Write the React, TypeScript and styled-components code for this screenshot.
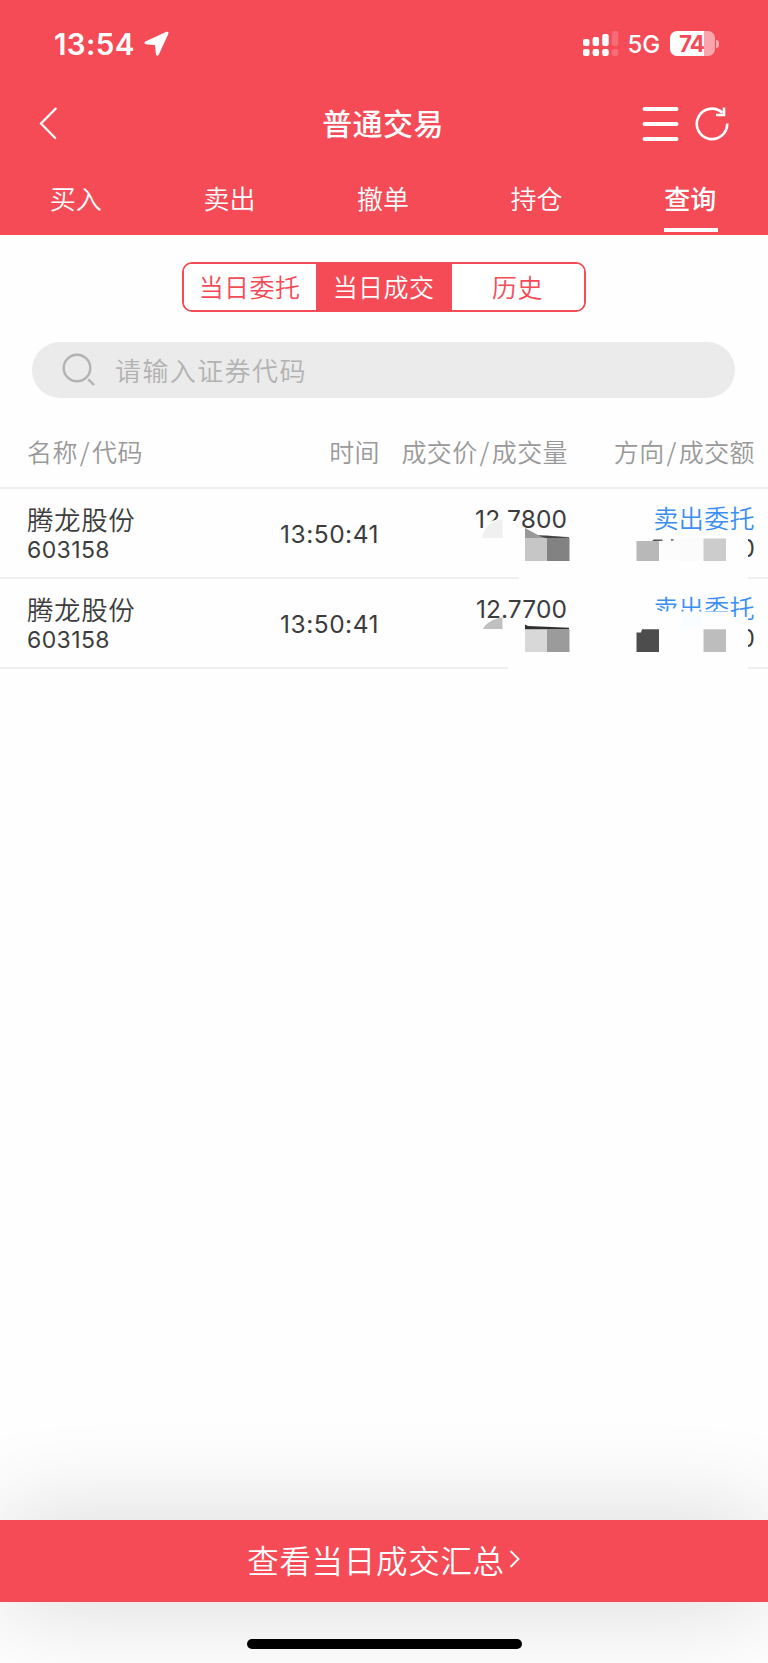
import React from "react";
import styled, { createGlobalStyle } from "styled-components";

const RED = "#f54b57";

const GlobalStyle = createGlobalStyle`
  * { box-sizing: border-box; }
  body {
    margin: 0;
    background: #fefefe;
    font-family: "Noto Sans CJK SC", sans-serif;
    color: #3c3c3c;
  }
`;

const Screen = styled.div`
  width: 768px;
  height: 1663px;
  display: flex;
  flex-direction: column;
  overflow: hidden;
  background: #fefefe;
`;

const Header = styled.header`
  height: 235px;
  background: ${RED};
  color: #fff;
  display: flex;
  flex-direction: column;
`;

const StatusBar = styled.div`
  height: 87px;
  padding: 0 49px 0 54px;
  display: flex;
  align-items: center;
  font-family: Inter, sans-serif;
`;

const Clock = styled.span`
  font-size: 29.5px;
  font-weight: 600;
  line-height: 36px;
  letter-spacing: 0.4px;
  margin: 1px 8px 0 0;
`;

const Network = styled.span`
  font-size: 24px;
  font-weight: 500;
  line-height: 30px;
  letter-spacing: -0.2px;
  margin: 3px 10px 0 9px;
`;

const Spacer = styled.div`
  flex: 1;
`;

const Battery = styled.div`
  display: flex;
  align-items: center;
  gap: 1px;
`;

const BatteryBody = styled.div`
  width: 45px;
  height: 25px;
  border-radius: 7px;
  background: linear-gradient(90deg, #fff 34px, #faa5ab 34px);
  color: ${RED};
  font-size: 22.5px;
  font-weight: 700;
  line-height: 26px;
  letter-spacing: -1px;
  padding-left: 9px;
`;

const BatteryCap = styled.div`
  width: 3px;
  height: 8px;
  border-radius: 0 4px 4px 0;
  background: #faa5ab;
`;

const TitleBar = styled.div`
  height: 74px;
  padding: 0 38px;
  display: grid;
  grid-template-columns: 1fr auto 1fr;
  align-items: center;
`;

const Title = styled.h1`
  margin: 0 2px 4px 0;
  font-size: 30px;
  line-height: 44px;
  font-weight: 500;
  letter-spacing: 0.4px;
`;

const Actions = styled.div`
  display: flex;
  justify-content: flex-end;
  align-items: center;
  gap: 14px;
`;

const Tabs = styled.nav`
  flex: 1;
  display: grid;
  grid-template-columns: repeat(5, 1fr);
  justify-items: center;
`;

const Tab = styled.div<{ $active?: boolean }>`
  width: 54px;
  height: 71px;
  padding-top: 18px;
  text-align: center;
  font-size: 26px;
  line-height: 38px;
  font-weight: ${(p) => (p.$active ? 500 : 350)};
  border-bottom: 4px solid ${(p) => (p.$active ? "#fff" : "transparent")};
  white-space: nowrap;
  text-indent: -2px;
`;

const Segments = styled.div`
  align-self: center;
  width: 404px;
  height: 50px;
  margin-top: 27px;
  display: grid;
  grid-template-columns: 132px 136px 1fr;
  border: 2px solid ${RED};
  border-radius: 10px;
  overflow: hidden;
`;

const Segment = styled.div<{ $active?: boolean }>`
  font-size: 25px;
  line-height: 45px;
  font-weight: 350;
  letter-spacing: 0.4px;
  text-align: center;
  text-indent: -1px;
  background: ${(p) => (p.$active ? RED : "#fff")};
  color: ${(p) => (p.$active ? "#fff" : RED)};
`;

const Search = styled.div`
  height: 56px;
  margin: 30px 33px 0 32px;
  padding-left: 30px;
  border-radius: 28px;
  background: #ebebeb;
  color: #b2b2b2;
  display: flex;
  align-items: center;
  gap: 19px;
`;

const Placeholder = styled.span`
  margin-bottom: 1px;
  font-size: 26px;
  font-weight: 350;
  line-height: 38px;
  letter-spacing: 1.4px;
`;

const Table = styled.div`
  position: relative;
`;

const TableHead = styled.div`
  height: 91px;
  padding: 17px 13px 0 27px;
  display: grid;
  grid-template-columns: 173px 180px 188px 1fr;
  align-items: center;
  border-bottom: 2px solid #efefef;
  color: #999;
  font-size: 25px;
  line-height: 36px;
  font-weight: 350;
`;

const HeadCell = styled.div<{ $right?: boolean }>`
  text-align: ${(p) => (p.$right ? "right" : "left")};
  white-space: nowrap;
  letter-spacing: 0.4px;
`;

const Slash = styled.span`
  margin: 0 2px;
`;

const Row = styled.div`
  height: 90px;
  padding: 0 13px 0 27px;
  display: grid;
  grid-template-columns: 173px 180px 188px 1fr;
  border-bottom: 2px solid #efefef;
`;

const Cell = styled.div<{ $right?: boolean }>`
  display: flex;
  flex-direction: column;
  align-items: ${(p) => (p.$right ? "flex-end" : "flex-start")};
  white-space: nowrap;
`;

const Name = styled.div`
  margin-top: 14px;
  font-size: 26.5px;
  line-height: 32px;
  font-weight: 350;
  letter-spacing: 0.6px;
`;

const Code = styled.div`
  margin-top: 5px;
  font-family: Inter, sans-serif;
  font-size: 23px;
  line-height: 20px;
  letter-spacing: 0.4px;
`;

const Figure = styled.div<{ $top: number; $tracking: number }>`
  margin-top: ${(p) => p.$top}px;
  padding-right: 1px;
  font-family: Inter, sans-serif;
  font-size: 24.5px;
  line-height: 30px;
  letter-spacing: ${(p) => p.$tracking}px;
`;

const Direction = styled.div`
  margin-top: 10px;
  font-size: 25px;
  line-height: 36px;
  font-weight: 350;
  letter-spacing: 0.4px;
  color: #3b8ff2;
`;

const Amount = styled.div`
  margin-top: -1px;
  font-family: Inter, sans-serif;
  font-size: 24px;
  line-height: 30px;
`;

const Mosaic = styled.svg`
  position: absolute;
  left: 460px;
  top: 92px;
`;

const Filler = styled.div`
  flex: 1;
`;

const Summary = styled.div`
  height: 82px;
  padding-bottom: 4px;
  background: ${RED};
  color: #fff;
  box-shadow: 0 0 100px rgba(0, 0, 0, 0.165);
  display: flex;
  align-items: center;
  justify-content: center;
  gap: 4px;
  font-size: 31.5px;
  line-height: 46px;
  font-weight: 350;
  letter-spacing: 0.7px;
`;

const HomeArea = styled.div`
  height: 61px;
  display: flex;
  justify-content: center;
  align-items: flex-start;
  padding-top: 37px;
  z-index: 1;
`;

const HomeIndicator = styled.div`
  width: 275px;
  height: 10px;
  border-radius: 5px;
  background: #000;
`;

const LocationArrow = () => (
  <svg width="26" height="26" viewBox="0 0 26 26">
    <path d="M24 2.2 3 11.8 13.4 12.8 14.4 23.2Z" fill="#fff" stroke="#fff" strokeWidth="3" strokeLinejoin="round" />
  </svg>
);

const Signal = () => (
  <svg width="36" height="26" viewBox="0 0 36 26" fill="#fff">
    <rect x="0" y="8" width="6.5" height="7" rx="2" />
    <rect x="9.6" y="6" width="6.5" height="9" rx="2" />
    <rect x="19.2" y="3" width="6.5" height="12" rx="2" />
    <rect x="28.8" y="0" width="6.5" height="15" rx="2" opacity=".18" />
    <rect x="0" y="18" width="6.5" height="7" rx="2" />
    <rect x="9.6" y="18" width="6.5" height="7" rx="2" />
    <rect x="19.2" y="18" width="6.5" height="7" rx="2" />
    <rect x="28.8" y="18" width="6.5" height="7" rx="2" opacity=".18" />
  </svg>
);

const BackIcon = () => (
  <svg width="20" height="34" viewBox="0 0 20 34" fill="none" stroke="#fff" strokeWidth="2.2" strokeLinecap="round">
    <path d="M17.7 1.6 3 16.4 17.2 31" />
  </svg>
);

const MenuIcon = () => (
  <svg width="40" height="40" viewBox="0 0 40 40" stroke="#fff" strokeWidth="4" strokeLinecap="round">
    <path d="M4.5 5H36.5M4.5 20H36.5M4.5 35H36.5" />
  </svg>
);

const RefreshIcon = () => (
  <svg width="36" height="36" viewBox="0 0 36 36" fill="none" stroke="#fff" strokeWidth="2.6">
    <path d="M33.2 17.6A15.2 15.2 0 1 1 28.4 6.8" />
    <path d="M30 1.5V9H22" />
  </svg>
);

const SearchIcon = () => (
  <svg width="34" height="34" viewBox="0 0 34 34" fill="none" stroke="#b2b2b2" strokeWidth="2.4">
    <circle cx="15" cy="15" r="13.3" />
    <path d="M26.3 26.3 32 32" />
  </svg>
);

const ChevronIcon = () => (
  <svg width="12" height="20" viewBox="0 0 12 20" fill="none" stroke="#fff" strokeWidth="1.8">
    <path d="M1.5 2 9.5 10 1.5 18" />
  </svg>
);

const RedactedFigures = () => (
  <Mosaic width="308" height="192" viewBox="0 0 308 192">
    <g fill="#fefefe">
      <path d="M43 31H62V40H65V46H109V76H43Z" />
      <path d="M22 44C23 36 31 30 38 29.5H43V48H22Z" />
      <rect x="59" y="83" width="229" height="10" />
      <rect x="177" y="48" width="111" height="36" />
      <rect x="48" y="173" width="240" height="10" />
      <rect x="43" y="137" width="66" height="26" />
      <path d="M190 121.5H272V127H288V164H177V121.5Z" />
    </g>
    <path d="M22 48C23 38 32 30 42.5 29.5V48Z" fill="#f0f0f0" />
    <path d="M65 38 78 45 109 47V49H65Z" fill="#999" />
    <path d="M78 45.5 88 45.8 109 47.5V48.5H87Z" fill="#444" />
    <rect x="65" y="48" width="22" height="23" fill="#c6c6c6" />
    <rect x="87" y="48" width="22.5" height="23" fill="#828282" />
    <rect x="199" y="49" width="22" height="22" fill="#fcfcfc" />
    <rect x="221" y="48" width="22" height="23" fill="#fbfbfb" />
    <rect x="176.5" y="51" width="22.5" height="20" fill="#b8b8b8" />
    <path d="M192 51 194 49.5H202.5V50.8ZM211 49.3H213.5V50.5H211Z" fill="#444" />
    <rect x="243.5" y="48.5" width="22.5" height="22.5" fill="#ccc" />
    <path d="M23 139C26 133 33 128.5 42.5 127.5V139Z" fill="#c0c0c0" />
    <path d="M65 134.5 68 136 109 137.8V139.5H65Z" fill="#2f2f2f" />
    <rect x="65" y="139.5" width="22" height="22.5" fill="#d8d8d8" />
    <rect x="87" y="139.5" width="22.5" height="22.5" fill="#9b9b9b" />
    <rect x="221" y="122" width="22" height="17" fill="#fafdff" />
    <path d="M176.5 142.5H181L182 139.3H199V162H176.5Z" fill="#4d4d4d" />
    <rect x="243.5" y="139.3" width="22.5" height="22.7" fill="#bdbdbd" />
  </Mosaic>
);

const tabs = ["买入", "卖出", "撤单", "持仓", "查询"];
const segments = ["当日委托", "当日成交", "历史"];
const heads = [
  ["名称", "代码"],
  ["时间"],
  ["成交价", "成交量"],
  ["方向", "成交额"],
];
const trades = [
  { name: "腾龙股份", code: "603158", time: "13:50:41", price: "12.7800", side: "卖出委托", amount: "0" },
  { name: "腾龙股份", code: "603158", time: "13:50:41", price: "12.7700", side: "卖出委托", amount: "0" },
];

export default function App() {
  return (
    <Screen>
      <GlobalStyle />
      <Header>
        <StatusBar>
          <Clock>13:54</Clock>
          <LocationArrow />
          <Spacer />
          <Signal />
          <Network>5G</Network>
          <Battery>
            <BatteryBody>74</BatteryBody>
            <BatteryCap />
          </Battery>
        </StatusBar>
        <TitleBar>
          <BackIcon />
          <Title>普通交易</Title>
          <Actions>
            <MenuIcon />
            <RefreshIcon />
          </Actions>
        </TitleBar>
        <Tabs>
          {tabs.map((t, i) => (
            <Tab key={t} $active={i === 4}>{t}</Tab>
          ))}
        </Tabs>
      </Header>
      <Segments>
        {segments.map((s, i) => (
          <Segment key={s} $active={i === 1}>{s}</Segment>
        ))}
      </Segments>
      <Search>
        <SearchIcon />
        <Placeholder>请输入证券代码</Placeholder>
      </Search>
      <Table>
        <TableHead>
          {heads.map(([a, b], i) => (
            <HeadCell key={a} $right={i > 0}>
              {a}
              {b && <Slash>/</Slash>}
              {b}
            </HeadCell>
          ))}
        </TableHead>
        {trades.map((t) => (
          <Row key={t.price}>
            <Cell>
              <Name>{t.name}</Name>
              <Code>{t.code}</Code>
            </Cell>
            <Cell $right>
              <Figure $top={30} $tracking={0.5}>{t.time}</Figure>
            </Cell>
            <Cell $right>
              <Figure $top={15} $tracking={0.1}>{t.price}</Figure>
            </Cell>
            <Cell $right>
              <Direction>{t.side}</Direction>
              <Amount>{t.amount}</Amount>
            </Cell>
          </Row>
        ))}
        <RedactedFigures />
      </Table>
      <Filler />
      <Summary>
        查看当日成交汇总
        <ChevronIcon />
      </Summary>
      <HomeArea>
        <HomeIndicator />
      </HomeArea>
    </Screen>
  );
}
